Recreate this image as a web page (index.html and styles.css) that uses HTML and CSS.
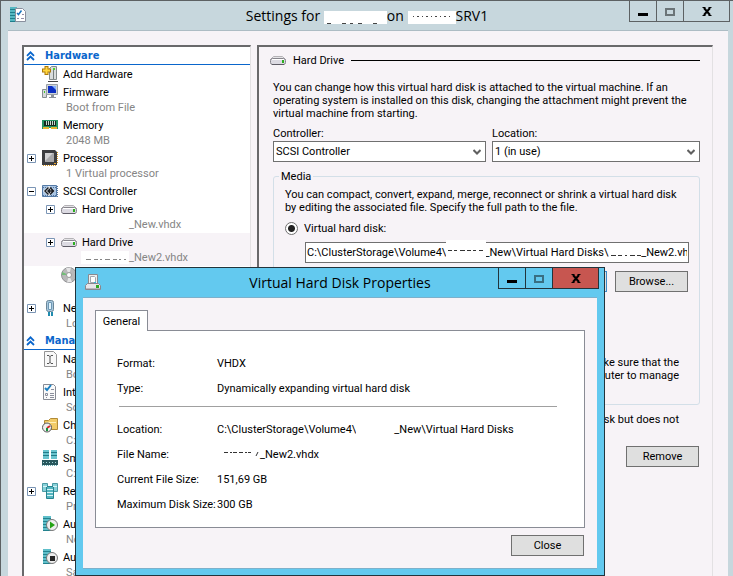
FILE: index.html
```html
<!DOCTYPE html>
<html lang="en">
<head>
    <meta charset="UTF-8">
    <meta name="viewport" content="width=device-width, initial-scale=1.0">
    <title>Virtual Machine Settings</title>
    <link rel="stylesheet" href="styles.css">
</head>
<body>
    <!-- Shared icons -->
    <svg class="sprite" aria-hidden="true">
        <symbol id="i-plus" viewBox="0 0 9 9"><path fill="#fff" stroke="#7b95b5" d="M.5.5h8v8h-8z"/><path stroke="#000" d="M2 4.500h5M4.500 2v5"/></symbol>
        <symbol id="i-minus" viewBox="0 0 9 9"><path fill="#fff" stroke="#7b95b5" d="M.5.5h8v8h-8z"/><path stroke="#000" d="M2 4.500h5"/></symbol>
        <symbol id="i-chevrons" viewBox="0 0 9 10"><path fill="none" stroke="#0a66cc" stroke-width="1.800" d="M1 4.800l3.500-3.500L8 4.800M1 9l3.500-3.500L8 9"/></symbol>
        <symbol id="i-drive" viewBox="0 0 16 16"><path fill="#e4e3e6" stroke="#b4b2b6" d="M3.500 4.500h9l3 3H.5z"/><rect x=".5" y="6.500" width="15" height="6" rx="2" fill="#dcdae2" stroke="#87858c"/><path stroke="#fff" d="M2 7.500h12"/><path fill="#2cae20" d="M12 8h2v3h-2z"/><path stroke="#5e5c66" d="M2 12.500h12"/></symbol>
        <symbol id="i-settings" viewBox="0 0 16 16"><path fill="#54b8c2" d="M0 0h7v15H0z"/><path stroke="#1e7e8b" d="M0 2.500h7M0 5.500h7M0 8.500h7M0 11.500h7M0 14.500h7"/><path fill="#fff" stroke="#888f9d" d="M5.500 1.500h7l3 3v10h-10z"/><path fill="none" stroke="#1b76bd" stroke-width="1.500" d="M7 6l1.500 1.500 3-4"/><path stroke="#9390a8" d="M12 7.500h2M7 11.500h2M11 11.500h3"/></symbol>
        <symbol id="i-add" viewBox="0 0 16 16"><path fill="#d9dddd" stroke="#838b8b" d="M7.500 2.500l2-2h5v13h-7z"/><path fill="#777f7f" d="M11 2h1v11h-1z"/><path fill="#46d531" d="M11 2h2v2h-2z"/><path stroke="#444" d="M6 15.500h10"/><path stroke="#ac7908" stroke-width="4" d="M0 4.500h9M4.500 0v9"/><path stroke="#ffd640" stroke-width="2" d="M1 4.500h7M4.500 1v7"/></symbol>
        <symbol id="i-firmware" viewBox="0 0 16 16"><path fill="#d6d9db" stroke="#858b90" d="M.5 5.500h4v8h-4z"/><path fill="#43c72f" d="M2 7h1v2H2z"/><path fill="#cfd4d9" stroke="#9aa0a6" d="M4.500.5h11v10h-11z"/><path fill="#0d2fc2" d="M6 2h8v7H6z"/><path fill="#84b0ff" d="M10 2h4v4z"/><path fill="#8c9299" d="M9 11h3v2h2v1H7v-1h2z"/></symbol>
        <symbol id="i-memory" viewBox="0 0 16 16"><path fill="#259262" d="M0 3h16v9H0z"/><path fill="#142a20" d="M2 4h12v5H2z"/><path stroke="#c9d8cf" d="M4.500 4v4M6.500 4v4M8.500 4v4M10.500 4v4M12.500 4v4"/><path fill="#e6b62f" d="M1 10h6v2H1zM9 10h6v2H9z"/><path fill="#fff" d="M7 11h2v2H7z"/></symbol>
        <symbol id="i-cpu" viewBox="0 0 16 16"><path stroke="#d89722" stroke-dasharray="1 1" d="M1 15.500h13M15.500 2v12"/><path fill="#3c3d40" d="M0 0h13l2 2v13H0z"/><path fill="#a8a8aa" d="M3 3h9v9H3z"/><path fill="#d2d2d4" d="M3 3h8l-8 8z"/><path fill="#e7a42b" d="M12 13h2v1h-2z"/></symbol>
        <symbol id="i-scsi" viewBox="0 0 16 16"><path fill="#a9c5e4" stroke="#547aa6" d="M.5 2.500h14v11H.5z"/><path stroke="#54749c" stroke-dasharray="1 1" d="M15.500 3v11M1 4.500h14M1 12.500h14"/><path fill="#fff" d="M7 3l6 5-6 5-6-5z"/><path fill="none" stroke="#171b22" stroke-width="1.500" d="M6.500 4.500L3 8l3.500 3.500M8 4.500L11.500 8 8 11.500M6 8h6M8 6L6 8l2 2"/></symbol>
        <symbol id="i-disc" viewBox="0 0 16 16"><circle cx="8" cy="8" r="7.500" fill="#b9b9ba" stroke="#929295"/><path fill="#e5e5e6" d="M8 8L5 1l5-.5zM8 8l3 7-5 .5z"/><path fill="#72bd77" d="M8 8L1 5v3z"/><circle cx="8" cy="8" r="2.500" fill="#fff" stroke="#999"/></symbol>
        <symbol id="i-network" viewBox="0 0 16 16"><rect x="4.500" y=".5" width="7" height="11" rx="2" fill="#a8c8de" stroke="#6b8799"/><path fill="#e2f3fc" stroke="#6f98b4" d="M6.500 2.500h3v7h-3z"/><path stroke="#218caf" stroke-width="2" d="M7 12v4M10 12v4"/></symbol>
        <symbol id="i-name" viewBox="0 0 16 16"><path fill="#f8f8f8" stroke="#949494" d="M2.500.5h9l3 3v12h-12z"/><path fill="none" stroke="#555" d="M5 4.500h2l1 1 1-1h2M8 5v7M5 12.500h2l1-1 1 1h2"/></symbol>
        <symbol id="i-checklist" viewBox="0 0 16 16"><path fill="#fafafa" stroke="#878b94" d="M1.500.5h10l2 2v13h-12z"/><path fill="none" stroke="#1d7fc0" stroke-width="2" d="M3 4l2 2 4-5"/><path fill="none" stroke="#8b8f9c" d="M9 5.500h3M3.500 9.500h2v2h-2zM8 9.500h4M8 11.500h4M4 13.500h1M8 13.500h4"/></symbol>
        <symbol id="i-checkpoint" viewBox="0 0 16 16"><path fill="#f2cb67" stroke="#b18a37" d="M2.500 3.500h4l2-2h7v11h-13z"/><path fill="#fff0b8" d="M4 5h10v1H4z"/><circle cx="5" cy="10.500" r="4.500" fill="#eee" stroke="#555"/><path stroke="#d52727" stroke-width="2" d="M5 11l3-2"/><path stroke="#16913c" stroke-width="2" d="M5 11v3"/></symbol>
        <symbol id="i-paging" viewBox="0 0 16 16"><path fill="#69c4ce" d="M1 0h6v9H1zM9 0h6v9H9z"/><path stroke="#227b88" d="M1 2.500h6M9 2.500h6M1 5.500h6M9 5.500h6"/><path fill="#28575d" d="M0 10h16v5H0z"/><path stroke="#a4d6d8" stroke-dasharray="1 2" d="M1 12.500h14"/><path stroke="#65aeb4" stroke-dasharray="1 1" d="M0 15.500h16"/></symbol>
        <symbol id="i-replica" viewBox="0 0 16 16"><path fill="#87d0d8" stroke="#4c9aa4" d="M.5.5h5v8h-5zM10.500.5h5v8h-5z"/><path fill="#54b5c0" stroke="#278490" d="M4.500 3.500h7v12h-7z"/><path stroke="#d8f4f6" d="M1 3.500h4M11 3.500h4M5 6.500h6M5 9.500h6M5 12.500h6"/></symbol>
        <symbol id="i-start" viewBox="0 0 16 16"><path fill="#5fbfca" d="M1 0h8v15H1z"/><path stroke="#23828e" d="M1 2.500h8M1 5.500h8M1 8.500h8M1 11.500h8M1 14.500h8"/><circle cx="10" cy="9" r="5.500" fill="#eee" stroke="#777"/><path fill="#25a315" d="M8 5.500l5 3.500-5 3.500z"/></symbol>
        <symbol id="i-stop" viewBox="0 0 16 16"><path fill="#5fbfca" d="M1 0h8v15H1z"/><path stroke="#23828e" d="M1 2.500h8M1 5.500h8M1 8.500h8M1 11.500h8M1 14.500h8"/><circle cx="10" cy="9" r="5.500" fill="#eee" stroke="#777"/><path fill="#262626" d="M8 7h5v5H8z"/></symbol>
        <symbol id="i-disk-file" viewBox="0 0 16 16"><path fill="#eee" stroke="#8a8a90" d="M3.500.5h9v9h-9z"/><path fill="#fff" stroke="#a3a8ae" d="M5.500 2.500h4l1 1v5h-5z"/><path fill="#35b7e0" d="M9 8h2v1H9z"/><path fill="#e7e5e9" stroke="#89878e" d="M2.500 9.500h11l2 2v4H.5v-4z"/><path fill="#b9b7bd" d="M1 14h14v1H1z"/><path fill="#2da820" d="M11 11h3v3h-3z"/></symbol>
        <symbol id="i-min" viewBox="0 0 12 9"><path fill="#000" d="M1 6h10v3H1z"/></symbol>
        <symbol id="i-max" viewBox="0 0 12 9"><path fill="none" stroke="currentColor" stroke-width="2" d="M2 2h8v6H2z"/></symbol>
        <symbol id="i-close" viewBox="0 0 12 9"><path fill="none" stroke="#000" stroke-width="2" d="M3 1l6 7M9 1L3 8"/><path stroke="#000" d="M1.500.5h3M7.500.5h3M1.500 8.500h3M7.500 8.500h3"/></symbol>
        <symbol id="i-arrow" viewBox="0 0 8 6"><path fill="none" stroke="#606060" stroke-width="2" d="M.5 1L4 4.500 7.500 1"/></symbol>
    </svg>

    <div class="window">
        <header class="titlebar">
            <svg class="icon"><use href="#i-settings"/></svg>
            <h1 class="title">Settings for <span class="redacted name"><svg viewBox="0 0 63 13"><path fill="none" stroke="#444" stroke-dasharray="4 11 4 4 3 5" d="M3 12.500h52"/></svg></span>on <span class="redacted host"><svg viewBox="0 0 48 13"><path fill="none" stroke="#444" stroke-dasharray="1 3 2 3" d="M5 5.500h39"/></svg></span>SRV1</h1>
            <div class="caption">
                <button type="button" aria-label="Minimize"><svg><use href="#i-min"/></svg></button>
                <button type="button" aria-label="Maximize"><svg><use href="#i-max"/></svg></button>
                <button type="button" class="close" aria-label="Close window"><svg><use href="#i-close"/></svg></button>
            </div>
        </header>

        <div class="client">
            <nav class="tree">
                <h2 class="group"><svg><use href="#i-chevrons"/></svg>Hardware</h2>
                <ul>
                    <li><div class="row"><svg class="icon"><use href="#i-add"/></svg>Add Hardware</div></li>
                    <li><div class="row"><svg class="icon"><use href="#i-firmware"/></svg>Firmware</div><p class="sub">Boot from File</p></li>
                    <li><div class="row"><svg class="icon"><use href="#i-memory"/></svg>Memory</div><p class="sub">2048 MB</p></li>
                    <li><div class="row"><button type="button" class="toggle" aria-label="Expand Processor"><svg><use href="#i-plus"/></svg></button><svg class="icon"><use href="#i-cpu"/></svg>Processor</div><p class="sub">1 Virtual processor</p></li>
                    <li>
                        <div class="row"><button type="button" class="toggle" aria-label="Collapse SCSI Controller"><svg><use href="#i-minus"/></svg></button><svg class="icon"><use href="#i-scsi"/></svg>SCSI Controller</div>
                        <ul class="children">
                            <li><div class="row"><button type="button" class="toggle" aria-label="Expand Hard Drive"><svg><use href="#i-plus"/></svg></button><svg class="icon"><use href="#i-drive"/></svg>Hard Drive</div><p class="sub"><span class="redacted drive"></span>_New.vhdx</p></li>
                            <li class="selected"><div class="row"><button type="button" class="toggle" aria-label="Expand Hard Drive"><svg><use href="#i-plus"/></svg></button><svg class="icon"><use href="#i-drive"/></svg>Hard Drive</div><p class="sub"><span class="redacted drive"><svg viewBox="0 0 48 13"><path fill="none" stroke="#858585" stroke-dasharray="5 3 4 2 2 3" d="M5 8.500h40"/></svg></span>_New2.vhdx</p></li>
                            <li><div class="row"><svg class="icon"><use href="#i-disc"/></svg></div><p class="sub"></p></li>
                        </ul>
                    </li>
                    <li><div class="row"><button type="button" class="toggle" aria-label="Expand Network"><svg><use href="#i-plus"/></svg></button><svg class="icon"><use href="#i-network"/></svg>Network</div><p class="sub">Local</p></li>
                </ul>
                <h2 class="group"><svg><use href="#i-chevrons"/></svg>Management</h2>
                <ul>
                    <li><div class="row"><svg class="icon"><use href="#i-name"/></svg>Name</div><p class="sub">Boot</p></li>
                    <li><div class="row"><svg class="icon"><use href="#i-checklist"/></svg>Integration</div><p class="sub">Some</p></li>
                    <li><div class="row"><svg class="icon"><use href="#i-checkpoint"/></svg>Checks</div><p class="sub">C:\</p></li>
                    <li><div class="row"><svg class="icon"><use href="#i-paging"/></svg>Smart</div><p class="sub">C:\</p></li>
                    <li><div class="row"><button type="button" class="toggle" aria-label="Expand Replica"><svg><use href="#i-plus"/></svg></button><svg class="icon"><use href="#i-replica"/></svg>Replica</div><p class="sub">Primary</p></li>
                    <li><div class="row"><svg class="icon"><use href="#i-start"/></svg>Auto</div><p class="sub">None</p></li>
                    <li><div class="row"><svg class="icon"><use href="#i-stop"/></svg>Auto</div><p class="sub">Save</p></li>
                </ul>
            </nav>

            <main class="pane">
                <h2 class="heading"><svg class="icon"><use href="#i-drive"/></svg>Hard Drive</h2>
                <p class="intro">You can change how this virtual hard disk is attached to the virtual machine. If an<br>operating system is installed on this disk, changing the attachment might prevent the<br>virtual machine from starting.</p>
                <div class="selects">
                    <div class="field">
                        <label for="controller">Controller:</label>
                        <div class="select"><select id="controller"><option>SCSI Controller</option></select><svg><use href="#i-arrow"/></svg></div>
                    </div>
                    <div class="field">
                        <label for="location">Location:</label>
                        <div class="select"><select id="location"><option>1 (in use)</option></select><svg><use href="#i-arrow"/></svg></div>
                    </div>
                </div>
                <fieldset class="media">
                    <legend>Media</legend>
                    <p>You can compact, convert, expand, merge, reconnect or shrink a virtual hard disk<br>by editing the associated file. Specify the full path to the file.</p>
                    <div class="choice"><input type="radio" name="media" id="vhd" checked><label for="vhd">Virtual hard disk:</label></div>
                    <div class="path">
                        <input type="text" aria-label="Virtual hard disk path" value="C:\ClusterStorage\Volume4\              _New\Virtual Hard Disks\            _New2.vhdx">
                        <svg class="mask" viewBox="0 0 384 21"><path fill="#fff" d="M141-2h40v19h-40z"/><path fill="none" stroke="#333" stroke-dasharray="4 2 3 3 5 2" d="M143 8.500h35"/><path fill="none" stroke="#333" stroke-dasharray="5 2 4 3 2 3" d="M306 13.500h30"/></svg>
                    </div>
                    <div class="buttons">
                        <button type="button" class="btn focus" aria-label="Inspect"></button>
                        <button type="button" class="btn">Browse...</button>
                    </div>
                    <p class="note">make sure that the<br>computer to manage</p>
                </fieldset>
                <p class="remove-note">disk but does not</p>
                <button type="button" class="btn remove">Remove</button>
            </main>
        </div>
    </div>

    <div class="dialog" role="dialog" aria-labelledby="dialog-title">
        <header class="titlebar">
            <svg class="icon"><use href="#i-disk-file"/></svg>
            <h1 class="title" id="dialog-title">Virtual Hard Disk Properties</h1>
            <div class="caption">
                <button type="button" aria-label="Minimize"><svg><use href="#i-min"/></svg></button>
                <button type="button" aria-label="Maximize"><svg><use href="#i-max"/></svg></button>
                <button type="button" class="close" aria-label="Close window"><svg><use href="#i-close"/></svg></button>
            </div>
        </header>
        <div class="dialog-body">
            <div class="tabs" role="tablist"><button type="button" class="tab" role="tab" aria-selected="true">General</button></div>
            <div class="sheet" role="tabpanel">
                <dl>
                    <dt>Format:</dt><dd>VHDX</dd>
                    <dt>Type:</dt><dd>Dynamically expanding virtual hard disk</dd>
                </dl>
                <hr>
                <dl>
                    <dt>Location:</dt><dd>C:\ClusterStorage\Volume4\<span class="redacted folder"></span>_New\Virtual Hard Disks</dd>
                    <dt>File Name:</dt><dd><span class="redacted file"><svg viewBox="0 0 43 13"><path fill="none" stroke="#333" stroke-dasharray="4 2 2 1 4 2" d="M7 4.500h27"/><path stroke="#333" d="M39 8l2-4"/></svg></span>_New2.vhdx</dd>
                    <dt>Current File Size:</dt><dd>151,69 GB</dd>
                    <dt>Maximum Disk Size:</dt><dd>300 GB</dd>
                </dl>
            </div>
            <button type="button" class="btn close-btn">Close</button>
        </div>
    </div>
</body>
</html>
```
FILE: styles.css
```css
* {
    box-sizing: border-box;
}
body {
    margin: 0;
    height: 100vh;
    overflow: hidden;
    font-family: Roboto, "Liberation Sans", sans-serif;
    font-size: 11px;
    line-height: 13px;
    color: #000;
}
h1, h2, p, ul, dl, dd {
    margin: 0;
    padding: 0;
    font-size: 11px;
    font-weight: normal;
}
ul {
    list-style: none;
}
button, input, select {
    font: inherit;
    color: inherit;
    margin: 0;
    padding: 0;
    border-radius: 0;
}
svg {
    display: block;
    flex: none;
}
.sprite {
    position: absolute;
    width: 0;
    height: 0;
}
.icon {
    width: 16px;
    height: 16px;
}

/* Windows */
.window {
    display: flex;
    flex-direction: column;
    height: 100vh;
    background: #c7d7dd;
    border-top: 1px solid #5d6163;
    border-left: 1px solid #5d6163;
}
.titlebar {
    display: grid;
    grid-template-columns: 106px 1fr 106px;
    height: 29px;
}
.titlebar > .icon {
    margin: 6px 0 0 9px;
}
.title {
    font-family: "Open Sans", "Noto Sans", sans-serif;
    font-size: 14px;
    line-height: 29px;
    text-align: center;
    white-space: nowrap;
}
.caption {
    display: flex;
    justify-content: flex-end;
    align-items: flex-start;
    color: #6b7477;
}
.caption button {
    display: flex;
    flex: none;
    align-items: center;
    justify-content: center;
    width: 27px;
    height: 21px;
    background: none;
    border: solid #5d6163;
    border-width: 0 0 1px 1px;
}
.caption .close {
    width: 47px;
    border-right-width: 1px;
}
.caption svg {
    width: 12px;
    height: 9px;
}
.window > .titlebar .caption {
    margin-right: 3px;
}
.redacted {
    display: inline-block;
    height: 13px;
    background: #fff;
    vertical-align: top;
}
.redacted svg {
    width: 100%;
    height: 13px;
}
.title .redacted {
    vertical-align: middle;
}
.name {
    width: 63px;
}
.host {
    width: 48px;
}
.client {
    flex: 1;
    display: grid;
    grid-template-columns: 229px 1fr;
    gap: 6px;
    min-height: 0;
    margin: 0 5px 0 7px;
    padding: 14px 15px 0 14px;
    background: #f7f3f7;
    border-top: 1px solid #adbcc4;
}

/* Hardware tree */
.tree, .pane {
    min-height: 0;
    overflow: hidden;
    border: solid #69696b;
    border-width: 2px 1px 0 2px;
    border-right-color: #e3e1e3;
}
.tree {
    background: #fff;
    white-space: nowrap;
}
.group {
    display: flex;
    align-items: center;
    gap: 10px;
    height: 18px;
    padding-left: 2px;
    border-bottom: 1px solid #0a66cc;
    color: #0a66cc;
    font-family: "DejaVu Sans Condensed", "DejaVu Sans", sans-serif;
    font-weight: bold;
}
.group svg {
    width: 9px;
    height: 10px;
}
.row {
    display: flex;
    align-items: center;
    gap: 5px;
    height: 18px;
    padding-left: 18px;
}
.row:has(.toggle) {
    padding-left: 3px;
}
.toggle {
    width: 10px;
    border: 0;
    background: none;
}
.toggle svg {
    width: 9px;
    height: 9px;
}
.sub {
    height: 15px;
    padding-left: 42px;
    color: #858585;
}
.children li {
    padding-left: 19px;
}
.children .sub {
    padding-left: 38px;
}
.selected {
    background: #f7f3f7;
}
.drive {
    width: 48px;
}
.children li:not(.selected) .drive {
    background: none;
}

/* Settings pane */
.pane {
    padding: 5px 12px 0 14px;
}
.heading {
    display: flex;
    align-items: center;
    gap: 7px;
    height: 16px;
    margin-left: -3px;
}
.heading::after {
    content: "";
    flex: 1;
    border-top: 1px solid #000;
}
.intro {
    margin-top: 13px;
    white-space: nowrap;
}
.selects {
    display: grid;
    grid-template-columns: 213px 1fr;
    gap: 6px;
    margin-top: 7px;
}
.select {
    display: grid;
    align-items: center;
    margin-top: 1px;
}
.select select, .select svg {
    grid-area: 1 / 1;
}
.select select {
    width: 100%;
    height: 21px;
    padding-left: 2px;
    appearance: none;
    background: #fff;
    border: 1px solid #707070;
}
.select svg {
    justify-self: end;
    width: 8px;
    height: 6px;
    margin-right: 5px;
    pointer-events: none;
}
.media {
    min-width: 0;
    margin: 8px 0 0;
    padding: 5px 11px 9px 11px;
    border: 1px solid #d3dfe8;
    border-radius: 3px;
    white-space: nowrap;
}
.media legend {
    margin-left: -6px;
    padding: 0 2px;
}
.choice {
    display: flex;
    align-items: center;
    gap: 6px;
    height: 13px;
    margin-top: 8px;
}
.choice input {
    appearance: none;
    width: 13px;
    height: 13px;
    border: 1px solid #707070;
    border-radius: 50%;
    background: #fff;
}
.choice input:checked {
    background: radial-gradient(circle, #222 3px, #fff 4px);
}
.path {
    display: grid;
    margin: 7px 0 0 20px;
}
.path input, .mask {
    grid-area: 1 / 1;
}
.path input {
    width: 100%;
    height: 21px;
    padding: 0 1px;
    background: #fff;
    border: 1px solid #707070;
    white-space: pre;
}
.mask {
    width: 384px;
    height: 21px;
    overflow: visible;
    pointer-events: none;
}
.buttons {
    display: flex;
    justify-content: flex-end;
    gap: 8px;
    margin-top: 8px;
}
.btn {
    width: 73px;
    height: 21px;
    background: #dfdfdf;
    border: 1px solid #707070;
}
.btn.focus {
    border-color: #3c8ac8;
}
.note {
    margin: 64px 9px 13px 0;
    text-align: right;
}
.remove-note {
    margin: 8px 21px 0 0;
    text-align: right;
}
.remove {
    display: block;
    margin: 20px 1px 0 auto;
}

/* Properties dialog, floats over the settings window */
.dialog {
    position: absolute;
    left: 75px;
    top: 267px;
    width: 530px;
    padding-bottom: 6px;
    background: #63c9ef;
    border: 1px solid #22343c;
}
.dialog .caption {
    margin-right: 5px;
    color: #396f82;
}
.dialog .caption button {
    border-color: #22343c;
}
.dialog .caption .close {
    background: #c75650;
}
.dialog-body {
    margin: 0 7px;
    padding: 12px;
    background: #f7f3f7;
    border: solid #7cb0cb;
    border-width: 1px 0;
}
.tabs {
    display: flex;
    margin-bottom: -1px;
}
.tab {
    position: relative;
    width: 53px;
    height: 21px;
    background: #fff;
    border: 1px solid #898c95;
    border-bottom: 0;
}
.sheet {
    padding: 20px 27px 10px 21px;
    background: #fff;
    border: 1px solid #898c95;
}
.sheet dl {
    display: grid;
    grid-template-columns: 100px 1fr;
    grid-auto-rows: 25px;
    align-items: center;
    white-space: nowrap;
}
.sheet hr {
    margin: 5px 0 10px 2px;
    border: 0;
    border-top: 1px solid #a0a0a0;
}
.folder {
    width: 38px;
}
.file {
    width: 43px;
}
.close-btn {
    display: block;
    margin: 7px 1px 0 auto;
}
```
